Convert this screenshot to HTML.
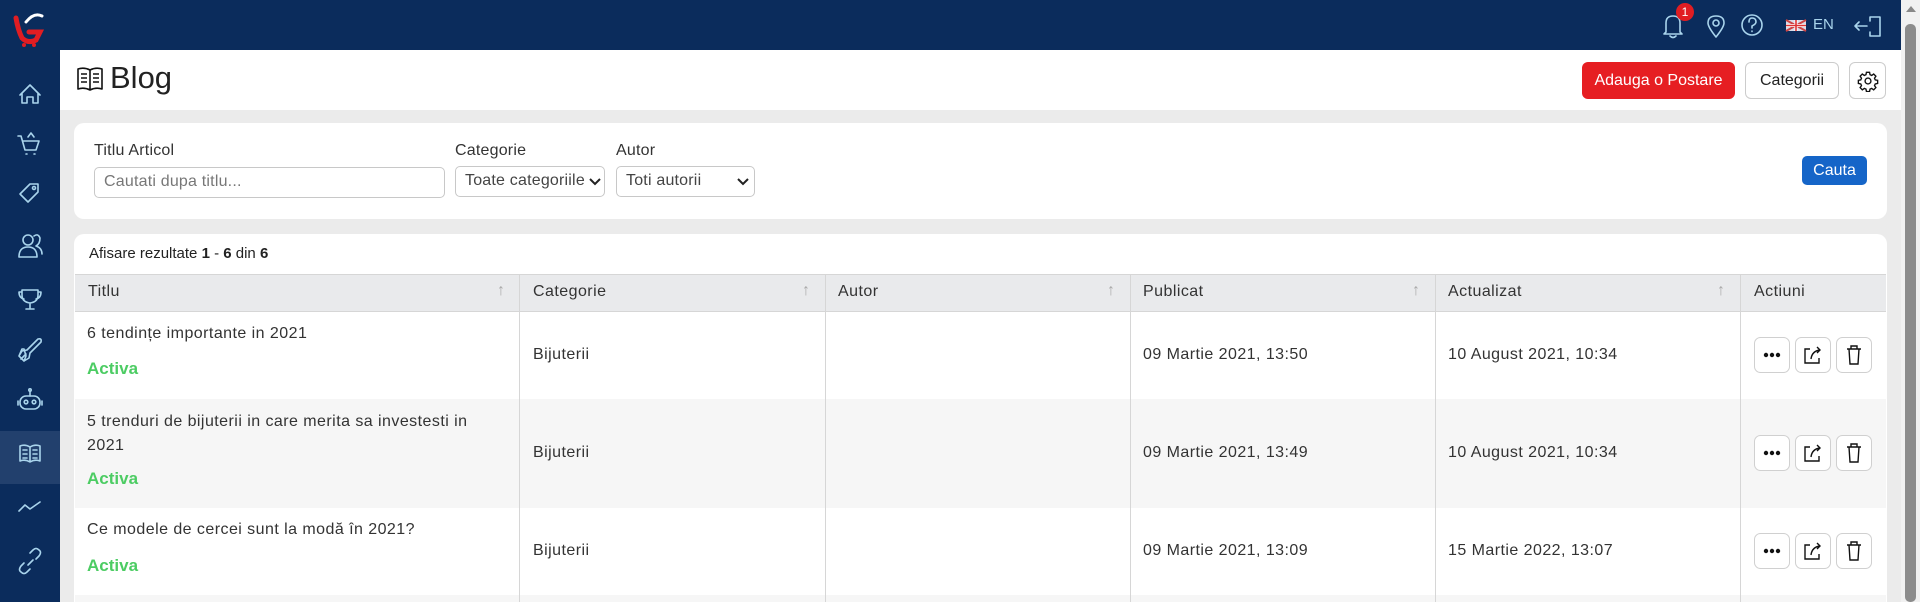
<!DOCTYPE html>
<html><head><meta charset="utf-8"><style>
*{box-sizing:border-box;margin:0;padding:0}
html{width:1920px;height:602px;overflow:hidden}
body{width:1920px;height:602px;overflow:hidden;background:#ebebeb;font-family:"Liberation Sans",sans-serif;color:#222;position:relative;font-size:15px}
.abs{position:absolute}
#side{left:0;top:0;width:60px;height:602px;background:#0b2c5c}
#top{left:60px;top:0;width:1841px;height:50px;background:#0b2c5c}
#hdr{left:60px;top:50px;width:1841px;height:60px;background:#fff}
.card{background:#fff;border-radius:10px}
.ic{stroke:#a9d4ec;fill:none;stroke-width:1.6;stroke-linecap:round;stroke-linejoin:round}
.lbl{font-size:16px;color:#333;letter-spacing:0.2px}
.inp{border:1px solid #c8c8c8;border-radius:5px;background:#fff;font-size:16px;color:#777;padding:5px 9px;height:31px;letter-spacing:0.2px}
.btn{border:1px solid #ccc;border-radius:6px;background:#fff;display:flex;align-items:center;justify-content:center}
.th{top:274px;height:38px;background:#e9eaec;border-bottom:1px solid #d6d6d6;border-top:1px solid #d6d6d6}
.vl{width:1px;background:#d6d6d6}
.cell{font-size:16px;color:#333;letter-spacing:0.45px}
.act{color:#4ccc63;font-weight:bold;font-size:17px}
.arr{color:#aaa;font-size:16px}
</style></head><body>
<div id="side" class="abs"></div>
<div id="top" class="abs"></div>
<svg class="abs" style="left:12px;top:12px" width="34" height="36" viewBox="0 0 34 36">
<path d="M4 6 Q6 18 10 26 Q16 32 24 28 L28 20 L17 20" stroke="#e11d22" stroke-width="5" fill="none" stroke-linecap="round"/>
<path d="M14 10 Q22 0 30 4" stroke="#fff" stroke-width="3" fill="none" stroke-linecap="round"/>
<circle cx="12" cy="33" r="2" fill="#e11d22"/><circle cx="22" cy="33" r="2" fill="#e11d22"/>
</svg>
<div class="abs" style="left:0;top:431px;width:60px;height:53px;background:#22406d"></div>
<svg class="abs" style="left:0;top:0" width="60" height="602">
<g class="ic">
<path d="M20 95 L30 85 L40 95 M22 93 V103 H27 V97 H33 V103 H38 V93"/>
<path d="M18 136 H21 L25 150 H36 L39 141 H23 M26 154 h1 M34 154 h1 M28 137 L31 133 L34 137"/>
<path d="M20 194 L30 184 H38 V192 L28 202 Z"/><circle cx="34" cy="188" r="1.5"/>
<circle cx="28" cy="240" r="5"/><path d="M19 257 Q19 247 28 247 Q37 247 37 257 Z M34 236 Q38 233 40 238 Q40 244 36 246 Q42 248 42 254"/>
<path d="M22 290 H38 V295 Q38 302 30 303 Q22 302 22 295 Z M22 292 H19 Q19 298 24 299 M38 292 H41 Q41 298 36 299 M30 303 V308 M26 309 H34"/>
<path d="M21 359 L26 354 M19 356 L22 351 L27 350 L38 339 Q42 338 41 342 L30 353 L29 358 L24 361 M24 349 H22 L19 356 L24 361 L26 356 Z"/>
<rect x="20" y="396" width="20" height="13" rx="6"/><circle cx="26" cy="402" r="1.8"/><circle cx="34" cy="402" r="1.8"/><path d="M30 396 V391 M18 401 V405 M42 401 V405"/><circle cx="30" cy="390" r="1.2"/>
<path d="M20 446 Q25 444 30 447 Q35 444 40 446 V461 Q35 459 30 462 Q25 459 20 461 Z M30 447 V462 M23 450 H27 M23 454 H27 M23 458 H27 M33 450 H37 M33 454 H37 M33 458 H37"/>
<path d="M19 511 L25 505 L30 509 L40 502"/>
<path d="M24 563 L21 566 Q18 570 21 572 Q24 575 27 572 L30 569 M28 565 L33 560 M36 559 L39 556 Q42 552 39 550 Q36 547 33 550 L30 553"/>
</g></svg>
<svg class="abs" style="left:1650px;top:8px" width="250" height="36">
<g class="ic">
<path d="M16 24 V15 Q16 8 23 8 Q30 8 30 15 V24 L32 26 H14 Z M20 28 Q23 31 26 28"/>
<path d="M66 29 Q58 19 58 15 Q58 8 66 8 Q74 8 74 15 Q74 19 66 29 Z"/><circle cx="66" cy="15" r="3"/>
<circle cx="102" cy="17" r="10"/><path d="M99 14 Q99 10 102 10 Q106 10 106 14 Q106 16 102 18 V20 M102 23 v.5"/>
<path d="M230 9 V28 H220 M220 9 H230 M217 18 H205 M209 14 L205 18 L209 22 M220 9 V13 M220 24 V28"/>
</g>
<rect x="136" y="12" width="20" height="11" fill="#d8dce8"/>
<path d="M136 12 L156 23 M156 12 L136 23" stroke="#c44" stroke-width="2"/>
<path d="M146 12 V23 M136 17.5 H156" stroke="#fff" stroke-width="3"/>
<path d="M146 12 V23 M136 17.5 H156" stroke="#d33" stroke-width="1.6"/>
</svg>
<div class="abs" style="left:1676px;top:3px;width:18px;height:18px;border-radius:50%;background:#e11d22;color:#fff;font-size:12px;text-align:center;line-height:18px">1</div>
<div class="abs" style="left:1813px;top:16px;color:#a9d4ec;font-size:15px">EN</div>
<div class="abs" style="left:1901px;top:0;width:19px;height:602px;background:#f1f1f1"></div>
<div class="abs" style="left:1905px;top:24px;width:11px;height:578px;background:#8c8c8c;border-radius:5px"></div>
<div class="abs" style="top:6px;width:0;height:0;border-left:5px solid transparent;border-right:5px solid transparent;border-bottom:6px solid #888;left:1906px"></div>
<div id="hdr" class="abs"></div>
<svg class="abs" style="left:77px;top:66px" width="26" height="26" viewBox="0 0 26 26"><g fill="none" stroke="#111" stroke-width="1.6" stroke-linejoin="round"><path d="M1 3 Q7 1 13 4 Q19 1 25 3 V23 Q19 21 13 24 Q7 21 1 23 Z M13 4 V24 M4 8 H10 M4 12 H10 M4 16 H10 M16 8 H22 M16 12 H22 M16 16 H22"/></g></svg>
<div class="abs" style="left:110px;top:60px;font-size:31px;color:#222">Blog</div>
<div class="abs" style="left:1582px;top:62px;width:153px;height:37px;background:#e61e22;border-radius:6px;color:#fff;font-size:16px;display:flex;align-items:center;justify-content:center">Adauga o Postare</div>
<div class="abs btn" style="left:1745px;top:62px;width:94px;height:37px;font-size:16px">Categorii</div>
<div class="abs btn" style="left:1849px;top:62px;width:37px;height:37px"><svg width="22" height="22" viewBox="0 0 24 24"><g fill="none" stroke="#111" stroke-width="1.5"><circle cx="12" cy="12" r="3.2"/><path d="M10.3 2.5h3.4l.5 2.6 1.8.8 2.2-1.5 2.4 2.4-1.5 2.2.8 1.8 2.6.5v3.4l-2.6.5-.8 1.8 1.5 2.2-2.4 2.4-2.200-1.5-1.8.8-.5 2.6h-3.4l-.5-2.6-1.8-.8-2.2 1.5-2.4-2.4 1.5-2.2-.8-1.8-2.6-.5v-3.4l2.6-.5.8-1.8-1.5-2.2 2.4-2.4 2.2 1.5 1.8-.8z"/></g></svg></div>
<div class="abs card" style="left:74px;top:123px;width:1813px;height:96px"></div>
<div class="abs lbl" style="left:94px;top:142px">Titlu Articol</div>
<div class="abs inp" style="left:94px;top:167px;width:351px">Cautati dupa titlu...</div>
<div class="abs lbl" style="left:455px;top:142px">Categorie</div>
<div class="abs inp" style="left:455px;top:166px;width:150px;color:#444">Toate categoriile</div>
<svg class="abs" style="left:589px;top:178px" width="12" height="8"><path d="M1 1 L6 6 L11 1" stroke="#222" stroke-width="2" fill="none"/></svg>
<div class="abs lbl" style="left:616px;top:142px">Autor</div>
<div class="abs inp" style="left:616px;top:166px;width:139px;color:#444">Toti autorii</div>
<svg class="abs" style="left:737px;top:178px" width="12" height="8"><path d="M1 1 L6 6 L11 1" stroke="#222" stroke-width="2" fill="none"/></svg>
<div class="abs" style="left:1802px;top:156px;width:65px;height:29px;background:#1565c8;border-radius:5px;color:#fff;font-size:16px;display:flex;align-items:center;justify-content:center">Cauta</div>
<div class="abs card" style="left:74px;top:234px;width:1813px;height:368px;border-radius:10px 10px 0 0"></div>
<div class="abs" style="left:89px;top:245px;font-size:15px;color:#222">Afisare rezultate <b>1</b> - <b>6</b> din <b>6</b></div>
<div class="abs th" style="left:75px;width:1811px"></div>
<div class="abs" style="left:75px;top:399px;width:1811px;height:109px;background:#f6f6f6"></div>
<div class="abs" style="left:75px;top:595px;width:1811px;height:7px;background:#f6f6f6"></div>
<div class="abs vl" style="left:519px;top:274px;height:328px"></div>
<div class="abs vl" style="left:825px;top:274px;height:328px"></div>
<div class="abs vl" style="left:1130px;top:274px;height:328px"></div>
<div class="abs vl" style="left:1435px;top:274px;height:328px"></div>
<div class="abs vl" style="left:1740px;top:274px;height:328px"></div>
<div class="abs cell" style="left:88px;top:283px">Titlu</div><div class="abs arr" style="left:497px;top:282px">↑</div>
<div class="abs cell" style="left:533px;top:283px">Categorie</div><div class="abs arr" style="left:802px;top:282px">↑</div>
<div class="abs cell" style="left:838px;top:283px">Autor</div><div class="abs arr" style="left:1107px;top:282px">↑</div>
<div class="abs cell" style="left:1143px;top:283px">Publicat</div><div class="abs arr" style="left:1412px;top:282px">↑</div>
<div class="abs cell" style="left:1448px;top:283px">Actualizat</div><div class="abs arr" style="left:1717px;top:282px">↑</div>
<div class="abs cell" style="left:1754px;top:283px">Actiuni</div>

<div class="abs cell" style="left:87px;top:325px">6 tendințe importante in 2021</div>
<div class="abs act" style="left:87px;top:359px">Activa</div>
<div class="abs cell" style="left:533px;top:346px">Bijuterii</div>
<div class="abs cell" style="left:1143px;top:346px">09 Martie 2021, 13:50</div>
<div class="abs cell" style="left:1448px;top:346px">10 August 2021, 10:34</div>

<div class="abs cell" style="left:87px;top:410px;line-height:24px">5 trenduri de bijuterii in care merita sa investesti in<br>2021</div>
<div class="abs act" style="left:87px;top:469px">Activa</div>
<div class="abs cell" style="left:533px;top:444px">Bijuterii</div>
<div class="abs cell" style="left:1143px;top:444px">09 Martie 2021, 13:49</div>
<div class="abs cell" style="left:1448px;top:444px">10 August 2021, 10:34</div>

<div class="abs cell" style="left:87px;top:521px">Ce modele de cercei sunt la modă în 2021?</div>
<div class="abs act" style="left:87px;top:556px">Activa</div>
<div class="abs cell" style="left:533px;top:542px">Bijuterii</div>
<div class="abs cell" style="left:1143px;top:542px">09 Martie 2021, 13:09</div>
<div class="abs cell" style="left:1448px;top:542px">15 Martie 2022, 13:07</div>

<svg class="abs" style="left:1754px;top:337px" width="120" height="250">
<defs><g id="ab">
<rect x="0.5" y="0.5" width="35" height="35" rx="6" fill="#fff" stroke="#d0d0d0"/>
<circle cx="12" cy="18" r="2.2" fill="#111"/><circle cx="18" cy="18" r="2.2" fill="#111"/><circle cx="24" cy="18" r="2.2" fill="#111"/>
<rect x="41.5" y="0.5" width="35" height="35" rx="6" fill="#fff" stroke="#d0d0d0"/>
<path d="M56 12 H51 V26 H65 V21 M57 22 Q58 14 66 13 M63 10 L66 13 L63 16" fill="none" stroke="#111" stroke-width="1.4"/>
<rect x="82.5" y="0.5" width="35" height="35" rx="6" fill="#fff" stroke="#d0d0d0"/>
<path d="M93 12 H107 M97 12 V9 H103 V12 M95 12 L96 27 H104 L105 12" fill="none" stroke="#111" stroke-width="1.4"/>
</g></defs>
<use href="#ab"/>
<use href="#ab" y="98"/>
<use href="#ab" y="196"/>
</svg>
</body></html>
